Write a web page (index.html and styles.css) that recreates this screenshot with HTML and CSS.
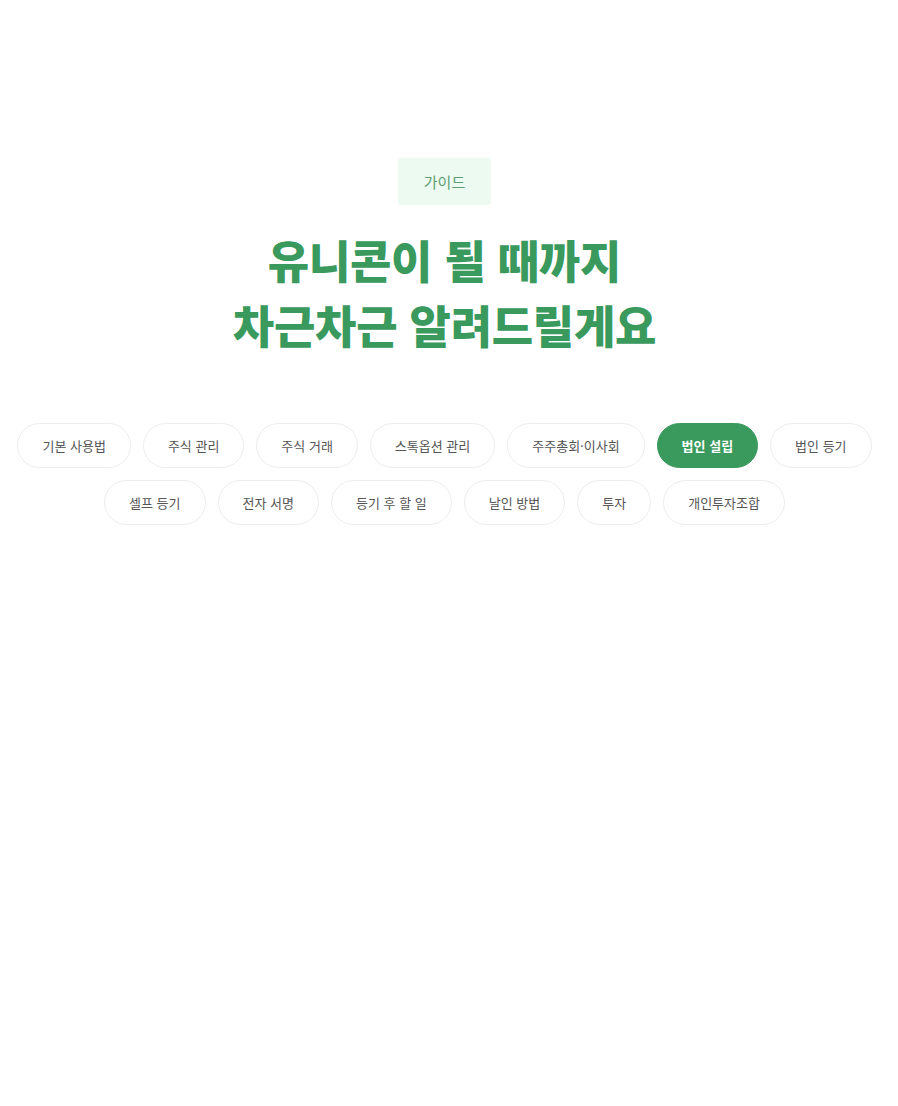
FILE: index.html
```html
<!DOCTYPE html>
<html lang="ko">
<head>
<meta charset="utf-8">
<link rel="stylesheet" href="styles.css">
</head>
<body>
<main class="guide">
  <div class="badge">가이드</div>
  <h1 class="title">유니콘이 될 때까지<br>차근차근 알려드릴게요</h1>
  <nav class="tabs">
    <div class="row">
      <span class="pill">기본 사용법</span>
      <span class="pill">주식 관리</span>
      <span class="pill">주식 거래</span>
      <span class="pill">스톡옵션 관리</span>
      <span class="pill">주주총회·이사회</span>
      <span class="pill active">법인 설립</span>
      <span class="pill">법인 등기</span>
    </div>
    <div class="row">
      <span class="pill">셀프 등기</span>
      <span class="pill">전자 서명</span>
      <span class="pill">등기 후 할 일</span>
      <span class="pill">날인 방법</span>
      <span class="pill">투자</span>
      <span class="pill">개인투자조합</span>
    </div>
  </nav>
</main>
</body>
</html>
```

FILE: styles.css
```css
html, body {
  margin: 0;
  padding: 0;
  background: #ffffff;
}
body {
  font-family: "Noto Sans CJK KR", "Noto Sans", sans-serif;
  width: 898px;
  min-height: 1106px;
}
.guide {
  display: flex;
  flex-direction: column;
  align-items: center;
  padding-top: 158px;
  padding-right: 9px;
}
.badge {
  background: #edfaf1;
  color: #5e9f72;
  font-size: 15px;
  line-height: 47px;
  padding: 0 26px;
  border-radius: 3px;
}
.title {
  margin: 22px 0 0 0;
  text-align: center;
  color: #3a9a5e;
  font-size: 45px;
  font-weight: 900;
  line-height: 65px;
  letter-spacing: -0.3px;
}
.tabs {
  margin-top: 66px;
  display: flex;
  flex-direction: column;
  align-items: center;
  gap: 12px;
}
.row {
  display: flex;
  gap: 12px;
  justify-content: center;
}
.pill {
  box-sizing: border-box;
  height: 45px;
  line-height: 43px;
  padding: 0 24px;
  border: 1px solid #ededed;
  border-radius: 23px;
  font-size: 13px;
  color: #555555;
  white-space: nowrap;
  background: #fff;
}
.pill.active {
  background: #3a9a5e;
  border-color: #3a9a5e;
  color: #ffffff;
  font-weight: 700;
}
```
